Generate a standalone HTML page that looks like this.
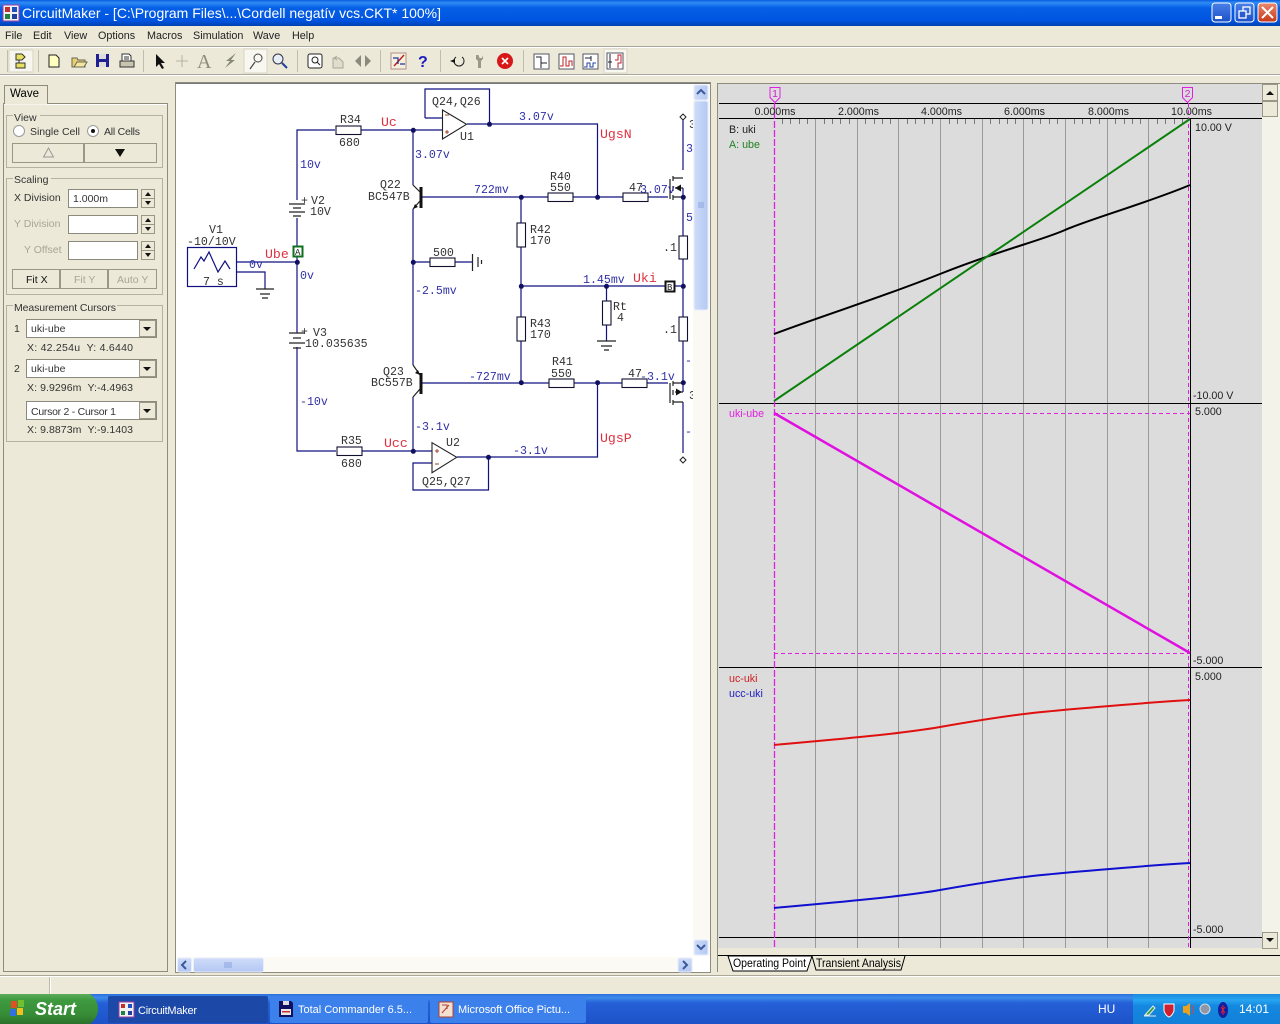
<!DOCTYPE html>
<html><head><meta charset="utf-8"><title>CircuitMaker</title>
<style>
html,body{margin:0;padding:0;background:#ece9d8;overflow:hidden}
svg{display:block}
.u{font-family:"Liberation Sans",sans-serif;font-size:11.5px;fill:#000}
.mn{font-family:"Liberation Sans",sans-serif;font-size:10.8px;fill:#222}
.m{font-family:"Liberation Mono",monospace;font-size:11.6px;fill:#333}
.b{font-family:"Liberation Mono",monospace;font-size:11.6px;fill:#3030a8}
.r{font-family:"Liberation Mono",monospace;font-size:13.2px;fill:#e03040}
.w{fill:none;stroke:#101080;stroke-width:1.2}
.k{fill:none;stroke:#222;stroke-width:1.2}
.n{fill:#101060}
.g{font-family:"Liberation Sans",sans-serif;font-size:10.5px;fill:#333}
.btn{fill:#ece9d8;stroke:#9a9786;stroke-width:1}
.inp{fill:#fff;stroke:#8c8a7c;stroke-width:1}
.grp{fill:none;stroke:#b5b2a0;stroke-width:1}
</style></head><body>
<svg width="1280" height="1024" viewBox="0 0 1280 1024" xmlns="http://www.w3.org/2000/svg">
<defs>
<linearGradient id="tb" x1="0" y1="0" x2="0" y2="1"><stop offset="0" stop-color="#0a5ae0"/><stop offset=".1" stop-color="#2f8cf5"/><stop offset=".3" stop-color="#0560e6"/><stop offset=".8" stop-color="#0054e0"/><stop offset="1" stop-color="#0040b0"/></linearGradient>
<linearGradient id="task" x1="0" y1="0" x2="0" y2="1"><stop offset="0" stop-color="#2a6fdc"/><stop offset=".12" stop-color="#3c8bea"/><stop offset=".3" stop-color="#2560d8"/><stop offset="1" stop-color="#1d52c8"/></linearGradient>
<linearGradient id="tray" x1="0" y1="0" x2="0" y2="1"><stop offset="0" stop-color="#1a8ae0"/><stop offset=".2" stop-color="#28a4f0"/><stop offset=".4" stop-color="#1488e0"/><stop offset="1" stop-color="#1280d8"/></linearGradient>
<linearGradient id="st" x1="0" y1="0" x2="0" y2="1"><stop offset="0" stop-color="#5cab5c"/><stop offset=".2" stop-color="#3f9a3f"/><stop offset=".7" stop-color="#368c36"/><stop offset="1" stop-color="#2b702b"/></linearGradient>
<linearGradient id="sb" x1="0" y1="0" x2="1" y2="0"><stop offset="0" stop-color="#cfdcf8"/><stop offset="1" stop-color="#b4c8f4"/></linearGradient>
<linearGradient id="sbh" x1="0" y1="0" x2="0" y2="1"><stop offset="0" stop-color="#cfdcf8"/><stop offset="1" stop-color="#b4c8f4"/></linearGradient>
<linearGradient id="cls" x1="0" y1="0" x2="0" y2="1"><stop offset="0" stop-color="#e88a70"/><stop offset="1" stop-color="#c83818"/></linearGradient>
<linearGradient id="wb" x1="0" y1="0" x2="0" y2="1"><stop offset="0" stop-color="#4a80e8"/><stop offset="1" stop-color="#1c50c8"/></linearGradient>
</defs>

<!-- title bar -->
<rect x="0" y="0" width="1280" height="26" fill="url(#tb)"/>
<rect x="3" y="5" width="16" height="16" fill="#f0f0f0" stroke="#a040a0"/>
<rect x="5" y="7" width="5" height="5" fill="#c03030"/><rect x="12" y="7" width="5" height="5" fill="#2050c0"/><rect x="5" y="14" width="5" height="5" fill="#208040"/><rect x="12" y="14" width="5" height="5" fill="#2040a0"/>
<text x="22" y="18" font-family="'Liberation Sans',sans-serif" font-size="14" fill="#fff" textLength="419" lengthAdjust="spacingAndGlyphs">CircuitMaker - [C:\Program Files\...\Cordell negatív vcs.CKT* 100%]</text>
<rect x="1212" y="3" width="19" height="19" rx="3" fill="url(#wb)" stroke="#fff"/><rect x="1215" y="16" width="7" height="3" fill="#fff"/>
<rect x="1235" y="3" width="19" height="19" rx="3" fill="url(#wb)" stroke="#fff"/><rect x="1243" y="7" width="7" height="7" fill="none" stroke="#fff" stroke-width="1.3"/><rect x="1239" y="11" width="7" height="7" fill="#2a5cd0" stroke="#fff" stroke-width="1.3"/>
<rect x="1258" y="3" width="19" height="19" rx="3" fill="url(#cls)" stroke="#fff"/><path d="M1262 7L1273 18M1273 7L1262 18" stroke="#fff" stroke-width="2"/>

<!-- menu -->
<text x="5" y="39" class="mn">File</text><text x="33" y="39" class="mn">Edit</text><text x="64" y="39" class="mn">View</text><text x="98" y="39" class="mn">Options</text><text x="147" y="39" class="mn">Macros</text><text x="193" y="39" class="mn">Simulation</text><text x="253" y="39" class="mn">Wave</text><text x="292" y="39" class="mn">Help</text>
<line x1="0" y1="46.5" x2="1280" y2="46.5" stroke="#aca899"/><line x1="0" y1="47.5" x2="1280" y2="47.5" stroke="#fff"/>
<line x1="0" y1="74.5" x2="1280" y2="74.5" stroke="#aca899"/><line x1="0" y1="75.5" x2="1280" y2="75.5" stroke="#fff"/>

<!-- toolbar -->
<g stroke="#c0bdac"><line x1="7.5" y1="50" x2="7.5" y2="72"/><line x1="38.5" y1="50" x2="38.5" y2="72"/><line x1="143.5" y1="50" x2="143.5" y2="72"/><line x1="297.5" y1="50" x2="297.5" y2="72"/><line x1="380.5" y1="50" x2="380.5" y2="72"/><line x1="440.5" y1="50" x2="440.5" y2="72"/><line x1="523.5" y1="50" x2="523.5" y2="72"/></g>
<rect x="9" y="50" width="24" height="22" fill="#f6f5ee" stroke="#d8d5c6"/>
<path d="M16 54h6l3 3-3 3h-6zM16 63h9v5h-9z" fill="#e8e060" stroke="#333"/><path d="M19 60v3" stroke="#333"/>
<path d="M49 55h7l3 3v9H49z" fill="#ffffc0" stroke="#222"/>
<path d="M72 58h5l1 2h7v7H72z" fill="#e8d070" stroke="#665"/><path d="M74 67l3-5h10l-3 5z" fill="#f4e8a0" stroke="#665"/>
<rect x="96" y="54" width="13" height="13" fill="#202090"/><rect x="99" y="54" width="7" height="5" fill="#ddd"/><rect x="99" y="62" width="7" height="5" fill="#ddd"/>
<path d="M122 54h7l2 2v6h-9z" fill="#fff" stroke="#333"/><rect x="120" y="61" width="14" height="6" fill="#c8c4b0" stroke="#333"/><path d="M124 57h5M124 59h5" stroke="#333"/>
<path d="M156 54v13l3-3 3 5 2-1-3-5h4z" fill="#111"/>
<path d="M182 55v12M176 61h12" stroke="#b5b2a0"/>
<text x="197" y="68" font-family="'Liberation Serif',serif" font-size="20" fill="#8c8a7c">A</text>
<path d="M236 53l-10 8h4l-5 7 10-8h-4z" fill="#888878"/>
<rect x="244" y="49" width="23" height="24" fill="#f8f7f0" stroke="#d8d5c6"/>
<circle cx="258" cy="58" r="4" fill="none" stroke="#444"/><path d="M255 62l-5 7" stroke="#444" stroke-width="1.2"/>
<circle cx="278" cy="59" r="5" fill="#e8eef8" stroke="#334"/><path d="M282 63l5 5" stroke="#2040a0" stroke-width="2"/>
<rect x="308" y="54" width="14" height="14" rx="2" fill="#fff" stroke="#222"/><circle cx="315" cy="60" r="3" fill="none" stroke="#222"/><path d="M317 62l3 3" stroke="#222"/>
<path d="M333 58h6l4 4v6H333z" fill="#e0ddcc" stroke="#aaa896"/><path d="M337 56l-3 2 3 2" fill="none" stroke="#aaa896"/>
<path d="M361 55l-6 6 6 6zM365 55l6 6-6 6z" fill="#8c8a7c"/>
<rect x="391" y="53" width="15" height="16" fill="#f4f0dc" stroke="#b09090"/><path d="M394 66l10-11" stroke="#c02020" stroke-width="1.5"/><path d="M393 58h5v6M400 64h5" stroke="#2030a0" stroke-width="1.2" fill="none"/>
<text x="418" y="67" font-family="'Liberation Sans',sans-serif" font-size="16" font-weight="bold" fill="#1a1ac0">?</text>
<path d="M462 57a5 5 0 1 1-6 0" fill="none" stroke="#222"/><path d="M450 61l5-2v4z" fill="#111"/>
<path d="M476 55v4l2 2v7h3v-7l2-2v-4l-1 3h-2.500l-1-3z" fill="#9a9886"/>
<circle cx="505" cy="61" r="8" fill="#d81818"/><path d="M502 58l6 6M508 58l-6 6" stroke="#fff" stroke-width="1.6"/>
<rect x="534" y="54" width="15" height="15" fill="#fff" stroke="#556"/><path d="M536 57h5v6h6M541 63v5" stroke="#223" fill="none"/>
<rect x="559" y="54" width="15" height="15" fill="#fff" stroke="#556"/><path d="M560 66h3v-9h3v9h3v-5h3v5" stroke="#c02020" fill="none"/>
<rect x="583" y="54" width="15" height="15" fill="#fff" stroke="#556"/><path d="M585 58h6M591 56v5" stroke="#223" fill="none"/><path d="M584 67h3v-4h3v4h3v-4h3" stroke="#2040a0" fill="none"/>
<rect x="604" y="49" width="23" height="24" fill="#f8f7f0" stroke="#d8d5c6"/>
<rect x="607" y="53" width="16" height="16" fill="#fff" stroke="#556"/><path d="M610 54v14M608 62h4" stroke="#223" fill="none"/><path d="M615 60h3v-5h3v8h-3v5" stroke="#c02020" fill="none"/>

<!-- left panel -->
<rect x="3.500" y="103.500" width="164" height="868" fill="#ece9d8" stroke="#8e8c7e"/>
<line x1="4" y1="104.500" x2="167" y2="104.500" stroke="#fff"/>
<path d="M4.500 104V85.500H47.500V104" fill="#ece9d8" stroke="#8e8c7e"/><line x1="5" y1="103.500" x2="47" y2="103.500" stroke="#ece9d8" stroke-width="2"/>
<text x="10" y="97" class="u">Wave</text>
<rect x="6.500" y="115.500" width="156" height="52" class="grp"/>
<rect x="13" y="110" width="27" height="12" fill="#ece9d8"/><text x="14" y="121" class="g">View</text>
<circle cx="19" cy="131" r="5.500" fill="#fff" stroke="#999"/><text x="30" y="135" class="g" textLength="50">Single Cell</text>
<circle cx="93" cy="131" r="5.500" fill="#fff" stroke="#999"/><circle cx="93" cy="131" r="2" fill="#111"/><text x="104" y="135" class="g" textLength="36">All Cells</text>
<rect x="12.500" y="143.500" width="71" height="19" class="btn"/><rect x="84.500" y="143.500" width="72" height="19" class="btn"/>
<path d="M48.500 148l-5 9h10z" fill="none" stroke="#999"/><path d="M115 149h10l-5 8z" fill="#111"/>

<rect x="6.500" y="178.500" width="156" height="116" class="grp"/>
<rect x="13" y="173" width="38" height="12" fill="#ece9d8"/><text x="14" y="183" class="g">Scaling</text>
<text x="14" y="201" class="g">X Division</text><rect x="68.500" y="189.500" width="69" height="18" class="inp"/><text x="73" y="202" class="g">1.000m</text>
<text x="14" y="227" class="g" style="fill:#a8a594">Y Division</text><rect x="68.500" y="215.500" width="69" height="18" class="inp"/>
<text x="24" y="253" class="g" style="fill:#a8a594">Y Offset</text><rect x="68.500" y="241.500" width="69" height="18" class="inp"/>
<rect x="141.500" y="189.500" width="13" height="9" class="btn"/><rect x="141.500" y="198.500" width="13" height="9" class="btn"/><path d="M145 196l3-4 3 4zM145 201h6l-3 4z" fill="#111"/>
<rect x="141.500" y="215.500" width="13" height="9" class="btn"/><rect x="141.500" y="224.500" width="13" height="9" class="btn"/><path d="M145 222l3-4 3 4zM145 227h6l-3 4z" fill="#111"/>
<rect x="141.500" y="241.500" width="13" height="9" class="btn"/><rect x="141.500" y="250.500" width="13" height="9" class="btn"/><path d="M145 248l3-4 3 4zM145 253h6l-3 4z" fill="#111"/>
<rect x="12.500" y="269.500" width="47" height="19" class="btn"/><rect x="60.500" y="269.500" width="47" height="19" class="btn"/><rect x="108.500" y="269.500" width="48" height="19" class="btn"/>
<text x="26" y="283" class="g" style="fill:#111">Fit X</text><text x="74" y="283" class="g" style="fill:#a8a594">Fit Y</text><text x="117" y="283" class="g" style="fill:#a8a594">Auto Y</text>

<rect x="6.500" y="305.500" width="156" height="136" class="grp"/>
<rect x="13" y="300" width="104" height="12" fill="#ece9d8"/><text x="14" y="311" class="g" textLength="102">Measurement Cursors</text>
<text x="14" y="332" class="g">1</text><rect x="26.500" y="319.500" width="130" height="18" class="inp"/><text x="31" y="332" class="g">uki-ube</text>
<rect x="139.500" y="320.500" width="16" height="16" class="btn"/><path d="M143 327h8l-4 4z" fill="#111"/>
<text x="27" y="351" class="g" textLength="106">X: 42.254u&#160;&#160;Y: 4.6440</text>
<text x="14" y="372" class="g">2</text><rect x="26.500" y="359.500" width="130" height="18" class="inp"/><text x="31" y="372" class="g">uki-ube</text>
<rect x="139.500" y="360.500" width="16" height="16" class="btn"/><path d="M143 367h8l-4 4z" fill="#111"/>
<text x="27" y="391" class="g" textLength="106">X: 9.9296m&#160;&#160;Y:-4.4963</text>
<rect x="26.500" y="401.500" width="130" height="18" class="inp"/><text x="31" y="415" class="g" textLength="85">Cursor 2 - Cursor 1</text>
<rect x="139.500" y="402.500" width="16" height="16" class="btn"/><path d="M143 409h8l-4 4z" fill="#111"/>
<text x="27" y="433" class="g" textLength="106">X: 9.8873m&#160;&#160;Y:-9.1403</text>

<!-- circuit pane -->
<rect x="175.500" y="82.500" width="535" height="890" fill="#fff" stroke="#8e8c7e"/>
<line x1="176" y1="83.500" x2="710" y2="83.500" stroke="#777"/>

<!-- schematic wires -->
<path class="w" d="M297 200V130H335M361 130H442M413 130V185M413 209V365M413 397V451M297 218V333M297 347V451H336M362 451H432M237 262H297M237 272H265V289M413 262H430M455 262H472"/>
<path class="w" d="M425 118V89H489.500V124M425 118H442M467 124H597.500V197M421 197H548M573 197H623M648 197H668"/>
<path class="w" d="M521 197V223M521 247V317M521 341V383M521 286H683M606.500 286V301M606.500 325V341"/>
<path class="w" d="M421 383H549M574 383H622M647 383H668M597.500 383V457H457M488.500 457V490H413V463H432"/>
<path class="w" d="M683 120V170M683 188V236M683 259V317M683 341V392M683 402V453"/>
<rect x="187.500" y="247.500" width="49" height="39" class="w"/>
<polyline points="194,269 201,257 204,261 209,252 218,272 225,261 230,269" class="w"/>
<!-- resistors -->
<g fill="#fff" stroke="#111030" stroke-width="1.1">
<rect x="336" y="126" width="25" height="8.500"/><rect x="337" y="447" width="25" height="8.500"/>
<rect x="548" y="193" width="25" height="8.500"/><rect x="623" y="193" width="25" height="8.500"/>
<rect x="549" y="379" width="25" height="8.500"/><rect x="622" y="379" width="25" height="8.500"/>
<rect x="430" y="258" width="25" height="8.500"/>
<rect x="517" y="223" width="8.500" height="24"/><rect x="517" y="317" width="8.500" height="24"/>
<rect x="602.500" y="301" width="8.500" height="24"/><rect x="679" y="236" width="8.500" height="23"/><rect x="679" y="317" width="8.500" height="24"/>
</g>
<!-- batteries, grounds -->
<path class="k" d="M289 204H305M293 208H301M289 212H305M293 216H301M289 333H305M293 338H301M289 343H305M293 348H301"/>
<path class="k" d="M256 289H274M260 294H270M262 298H268M597 341H616M601 346H612M604 350H609M472.500 254V271M478 257V267M481.500 260V264"/>
<!-- transistors -->
<path d="M419.500 187h3v21h-3zM419.500 373h3v21h-3z" fill="#111"/>
<path class="k" d="M413 185L420 192M420 201L413 209M413 365L420 375M420 389L413 397"/>
<path d="M413 209l2-5 3 3zM420 375l-5-2 3-3z" fill="#111"/>
<!-- MOSFETs -->
<path class="k" d="M670 179V199M673 176V181M673 186V191M673 195V200M673 178H683M675 188H683M673 197H683"/>
<path d="M675 188l6-3.500v7z" fill="#111"/>
<path class="k" d="M670 383V403M673 381V386M673 390V395M673 400V405M673 383H683M675 392H683M673 402H683"/>
<path d="M682 392l-6-3.500v7z" fill="#111"/>
<!-- op amps -->
<path d="M442.500 110V139L466.500 124.300Z M432 442.700V472.700L456.700 457.300Z" fill="#fff" stroke="#222" stroke-width="1.1"/>
<path d="M445 115h4M447 130v4M445 132h4M435 451h4M437 449v4M435 464h4" stroke="#a04020" stroke-width="1"/>
<!-- nodes -->
<g class="n"><circle cx="297.300" cy="262.300" r="2.500"/><circle cx="413.300" cy="130.300" r="2.500"/><circle cx="413.300" cy="262.300" r="2.500"/><circle cx="413.300" cy="451.300" r="2.500"/><circle cx="489.500" cy="124.300" r="2.500"/><circle cx="488.500" cy="457.300" r="2.500"/><circle cx="521.300" cy="197.300" r="2.500"/><circle cx="597.600" cy="197.300" r="2.500"/><circle cx="521.300" cy="286.300" r="2.500"/><circle cx="606.500" cy="286.300" r="2.500"/><circle cx="683.300" cy="197.300" r="2.500"/><circle cx="683.300" cy="286.300" r="2.500"/><circle cx="683.300" cy="382.700" r="2.500"/><circle cx="521.300" cy="382.700" r="2.500"/><circle cx="597.600" cy="382.700" r="2.500"/></g>
<path d="M683 114l3 3-3 3-3-3zM683 457l3 3-3 3-3-3z" fill="#fff" stroke="#222"/>
<rect x="293.500" y="246.500" width="9" height="10" fill="#fff" stroke="#107020" stroke-width="2"/><text x="295" y="255" font-family="'Liberation Mono',monospace" font-size="9" fill="#222">A</text>
<rect x="665.500" y="281.500" width="9" height="10" fill="#fff" stroke="#111" stroke-width="2"/><text x="667" y="290" font-family="'Liberation Mono',monospace" font-size="9" fill="#222">B</text>

<!-- schematic text -->
<g class="m">
<text x="340" y="123">R34</text><text x="339" y="146">680</text>
<text x="380" y="188">Q22</text><text x="368" y="200">BC547B</text>
<text x="432" y="105">Q24,Q26</text><text x="460" y="140">U1</text>
<text x="550" y="180">R40</text><text x="550" y="191">550</text>
<text x="629" y="191">47</text>
<text x="530" y="233">R42</text><text x="530" y="244">170</text>
<text x="663" y="251">.1</text>
<text x="433" y="256">500</text>
<text x="209" y="233">V1</text><text x="187" y="245">-10/10V</text><text x="203" y="285">7 s</text>
<text x="301" y="204">+</text><text x="311" y="204">V2</text><text x="310" y="215">10V</text>
<text x="301" y="335">+</text><text x="313" y="336">V3</text><text x="305" y="347">10.035635</text>
<text x="613" y="310">Rt</text><text x="617" y="321">4</text>
<text x="530" y="327">R43</text><text x="530" y="338">170</text>
<text x="663" y="333">.1</text>
<text x="552" y="365">R41</text><text x="551" y="377">550</text>
<text x="628" y="377">47</text>
<text x="383" y="375">Q23</text><text x="371" y="386">BC557B</text>
<text x="341" y="444">R35</text><text x="341" y="467">680</text>
<text x="446" y="446">U2</text><text x="422" y="485">Q25,Q27</text>
<text x="689" y="128">3</text><text x="689" y="399">3</text>
</g>
<g class="b">
<text x="300" y="168">10v</text><text x="249" y="268">0v</text><text x="300" y="279">0v</text>
<text x="415" y="158">3.07v</text><text x="519" y="120">3.07v</text>
<text x="474" y="193">722mv</text><text x="640" y="193">3.07v</text>
<text x="415" y="294">-2.5mv</text><text x="583" y="283">1.45mv</text>
<text x="300" y="405">-10v</text><text x="469" y="380">-727mv</text>
<text x="640" y="380">-3.1v</text><text x="415" y="430">-3.1v</text>
<text x="513" y="454">-3.1v</text>
<text x="686" y="152">3</text><text x="686" y="221">5</text>
<text x="685" y="364">-</text><text x="685" y="435">-</text>
</g>
<g class="r">
<text x="381" y="126">Uc</text><text x="600" y="138">UgsN</text>
<text x="265" y="258">Ube</text><text x="633" y="282">Uki</text>
<text x="384" y="447">Ucc</text><text x="600" y="442">UgsP</text>
</g>

<!-- circuit scrollbars -->
<rect x="693" y="84" width="17" height="872" fill="#faf9f4"/>
<rect x="177" y="957" width="516" height="15" fill="#fbfaf5"/>
<rect x="694" y="85" width="14" height="15" rx="2" fill="url(#sb)" stroke="#e8eefc"/>
<path d="M697 94l4-4 4 4" fill="none" stroke="#3a5a9a" stroke-width="2"/>
<rect x="694" y="101" width="14" height="209" rx="2" fill="url(#sb)" stroke="#e8eefc"/>
<path d="M698 203h6M698 205h6M698 207h6" stroke="#8aa4dc"/>
<rect x="694" y="940" width="14" height="15" rx="2" fill="url(#sb)" stroke="#e8eefc"/>
<path d="M697 945l4 4 4-4" fill="none" stroke="#3a5a9a" stroke-width="2"/>
<rect x="177.500" y="958" width="14" height="14" rx="2" fill="url(#sbh)" stroke="#e8eefc"/>
<path d="M186 961l-4 4 4 4" fill="none" stroke="#3a5a9a" stroke-width="2"/>
<rect x="193.500" y="958" width="70" height="14" rx="2" fill="url(#sbh)" stroke="#e8eefc"/>
<path d="M225 962v6M227 962v6M229 962v6M231 962v6" stroke="#8aa4dc"/>
<rect x="678" y="958" width="14" height="14" rx="2" fill="url(#sbh)" stroke="#e8eefc"/>
<path d="M683 961l4 4-4 4" fill="none" stroke="#3a5a9a" stroke-width="2"/>

<!-- splitter -->
<rect x="711" y="83" width="7" height="890" fill="#ece9d8"/>
<line x1="717.500" y1="83" x2="717.500" y2="972" stroke="#8e8c7e"/>

<!-- wave pane -->
<rect x="718" y="83" width="544" height="865" fill="#dcdcdc"/>
<line x1="718" y1="83.500" x2="1280" y2="83.500" stroke="#8e8c7e"/>
<g stroke="#9a9a9a" stroke-width="1">
<line x1="815.500" y1="118" x2="815.500" y2="948"/><line x1="857.500" y1="118" x2="857.500" y2="948"/><line x1="898.500" y1="118" x2="898.500" y2="948"/><line x1="940.500" y1="118" x2="940.500" y2="948"/><line x1="982.500" y1="118" x2="982.500" y2="948"/><line x1="1023.500" y1="118" x2="1023.500" y2="948"/><line x1="1065.500" y1="118" x2="1065.500" y2="948"/><line x1="1107.500" y1="118" x2="1107.500" y2="948"/><line x1="1148.500" y1="118" x2="1148.500" y2="948"/>
</g>
<path stroke="#777" stroke-width="1" d="M782.500 118v6M790.500 118v6M799.500 118v6M807.500 118v6M824.500 118v6M832.500 118v6M840.500 118v6M849.500 118v6M865.500 118v6M874.500 118v6M882.500 118v6M890.500 118v6M907.500 118v6M915.500 118v6M924.500 118v6M932.500 118v6M949.500 118v6M957.500 118v6M965.500 118v6M974.500 118v6M990.500 118v6M999.500 118v6M1007.500 118v6M1015.500 118v6M1032.500 118v6M1040.500 118v6M1049.500 118v6M1057.500 118v6M1074.500 118v6M1082.500 118v6M1090.500 118v6M1099.500 118v6M1115.500 118v6M1124.500 118v6M1132.500 118v6M1140.500 118v6M1157.500 118v6M1165.500 118v6M1174.500 118v6M1182.500 118v6"/>
<g stroke="#000" stroke-width="1">
<line x1="719" y1="103.500" x2="1262" y2="103.500"/><line x1="719" y1="118.500" x2="1262" y2="118.500"/>
<line x1="719" y1="403.500" x2="1262" y2="403.500"/><line x1="719" y1="667.500" x2="1262" y2="667.500"/><line x1="719" y1="937.500" x2="1262" y2="937.500"/>
<line x1="1190.500" y1="118" x2="1190.500" y2="948"/>
</g>
<line x1="774.500" y1="103" x2="774.500" y2="948" stroke="#e020e0" stroke-width="1.3" stroke-dasharray="7 2"/>
<line x1="1188.500" y1="103" x2="1188.500" y2="948" stroke="#e020e0" stroke-width="1" stroke-dasharray="4 3"/>
<line x1="774" y1="413.500" x2="1190" y2="413.500" stroke="#e020e0" stroke-dasharray="4 3"/>
<line x1="774" y1="653.500" x2="1190" y2="653.500" stroke="#e020e0" stroke-dasharray="4 3"/>
<path d="M770 87.500h10v10l-5 5-5-5z" fill="#dcdcdc" stroke="#e020e0"/>
<path d="M1182.500 87.500h10v10l-5 5-5-5z" fill="#dcdcdc" stroke="#e020e0"/>
<text x="775" y="97" text-anchor="middle" font-family="'Liberation Sans',sans-serif" font-size="10.500" fill="#d020d0">1</text>
<text x="1187.500" y="97" text-anchor="middle" font-family="'Liberation Sans',sans-serif" font-size="10.500" fill="#d020d0">2</text>
<g font-family="'Liberation Sans',sans-serif" font-size="10.700" fill="#222">
<text x="754.500" y="115">0.000ms</text><text x="838" y="115">2.000ms</text><text x="921" y="115">4.000ms</text><text x="1004" y="115">6.000ms</text><text x="1088" y="115">8.000ms</text><text x="1171" y="115">10.00ms</text>
<text x="729" y="133">B: uki</text><text x="729" y="148" fill="#208020">A: ube</text>
<text x="729" y="417" fill="#e020e0">uki-ube</text>
<text x="729" y="682" fill="#d02020">uc-uki</text><text x="729" y="697" fill="#2020c0">ucc-uki</text>
<text x="1195" y="131">10.00 V</text><text x="1193" y="399">-10.00 V</text>
<text x="1195" y="415">5.000</text><text x="1193" y="664">-5.000</text>
<text x="1195" y="680">5.000</text><text x="1193" y="933">-5.000</text>
</g>
<path d="M774 334C830 313 880 298 940 274S1040 241 1065 230S1150 202 1190 185" fill="none" stroke="#000" stroke-width="2"/>
<polyline points="774,401 1190,119" fill="none" stroke="#0a800a" stroke-width="2"/>
<polyline points="774,413 1190,653" fill="none" stroke="#e010e0" stroke-width="2.500"/>
<path d="M774 745C830 740 900 734 940 727S1000 717 1024 714S1140 703 1190 700" fill="none" stroke="#e01010" stroke-width="2"/>
<path d="M774 908C830 903 900 897 940 890S1000 880 1024 877S1140 866 1190 863" fill="none" stroke="#1010d0" stroke-width="2"/>

<!-- wave right scrollbar -->
<rect x="1262" y="84" width="18" height="864" fill="#f4f3ea"/>
<rect x="1262.500" y="84.500" width="15" height="16" class="btn"/><path d="M1266 95h8l-4-4z" fill="#111"/>
<rect x="1262.500" y="101.500" width="15" height="15" class="btn"/>
<rect x="1262.500" y="932.500" width="15" height="16" class="btn"/><path d="M1266 938h8l-4 4z" fill="#111"/>

<!-- tabs -->
<line x1="718" y1="955.500" x2="1280" y2="955.500" stroke="#000"/>
<path d="M728 956l5 15h74l5-15z" fill="#fff" stroke="#000"/>
<path d="M812 956l4 14h85l4-14" fill="#ece9d8" stroke="#000"/>
<g font-family="'Liberation Sans',sans-serif" font-size="12" fill="#000">
<text x="733" y="967" textLength="73" lengthAdjust="spacingAndGlyphs">Operating Point</text>
<text x="816" y="967" textLength="85" lengthAdjust="spacingAndGlyphs">Transient Analysis</text>
</g>

<!-- status bar -->
<line x1="0" y1="975.500" x2="1280" y2="975.500" stroke="#aca899"/><line x1="0" y1="976.500" x2="1280" y2="976.500" stroke="#fff"/>
<line x1="50.500" y1="977" x2="50.500" y2="994" stroke="#fff"/><line x1="49.500" y1="977" x2="49.500" y2="994" stroke="#bdbaa8"/>

<!-- taskbar -->
<rect x="0" y="994" width="1280" height="30" fill="url(#task)"/>
<path d="M0 994H90q8 6 8 15t-8 15H0z" fill="url(#st)"/>
<rect x="11" y="1001" width="6" height="7" fill="#e05020"/><rect x="18" y="1000" width="6" height="7" fill="#70c030"/><rect x="10" y="1009" width="6" height="7" fill="#3070e0"/><rect x="17" y="1008" width="6" height="7" fill="#f0c020"/>
<text x="35" y="1015" font-family="'Liberation Sans',sans-serif" font-size="18" font-style="italic" font-weight="bold" fill="#fff">Start</text>
<rect x="108" y="996" width="160" height="27" rx="2" fill="#1c48a8"/>
<rect x="270" y="996" width="158" height="27" rx="2" fill="#3c80ec"/>
<rect x="430" y="996" width="156" height="27" rx="2" fill="#3c80ec"/>
<rect x="119" y="1002" width="15" height="15" fill="#f0f0f0" stroke="#a040a0"/><rect x="121" y="1004" width="4" height="4" fill="#c03030"/><rect x="128" y="1004" width="4" height="4" fill="#2050c0"/><rect x="121" y="1011" width="4" height="4" fill="#208040"/><rect x="128" y="1011" width="4" height="4" fill="#2040a0"/>
<path d="M279 1001h12l2 2v14h-14z" fill="#101060"/><rect x="281" y="1009" width="10" height="6" fill="#e8e8e8"/><rect x="282" y="1011" width="8" height="1.500" fill="#d03030"/><rect x="283" y="1001" width="6" height="4" fill="#ddd"/>
<rect x="439" y="1002" width="14" height="15" fill="#f4e0d0" stroke="#b04030"/><path d="M442 1013l7-8M442 1005h5v4" stroke="#b04030" fill="none"/>
<g font-family="'Liberation Sans',sans-serif" font-size="11" fill="#fff">
<text x="138" y="1014" textLength="59">CircuitMaker</text><text x="298" y="1013" textLength="114">Total Commander 6.5...</text><text x="458" y="1013" textLength="112">Microsoft Office Pictu...</text>
<text x="1098" y="1013" font-size="12">HU</text>
</g>
<rect x="1133" y="994" width="147" height="30" fill="url(#tray)"/>
<g font-family="'Liberation Sans',sans-serif" font-size="12" fill="#fff"><text x="1239" y="1013">14:01</text></g>
<path d="M1145 1015l8-9 2 2-6 7zM1144 1016h12" stroke="#e8e8e8" fill="#30a040"/>
<path d="M1164 1004h10v7q-2 5-5 6-3-1-5-6z" fill="#d02030" stroke="#fff"/>
<path d="M1183 1006h3l4-3v13l-4-3h-3z" fill="#e8a020"/><path d="M1192 1005q2 4 0 9" stroke="#e84020" fill="none"/>
<circle cx="1205" cy="1009" r="5" fill="#9098a8" stroke="#d0d8e0"/>
<ellipse cx="1223" cy="1010" rx="5" ry="8" fill="#1020a0"/><path d="M1223 1005v10M1221 1007l4 6M1221 1013l4-6" stroke="#e02030"/>
</svg>
</body></html>
